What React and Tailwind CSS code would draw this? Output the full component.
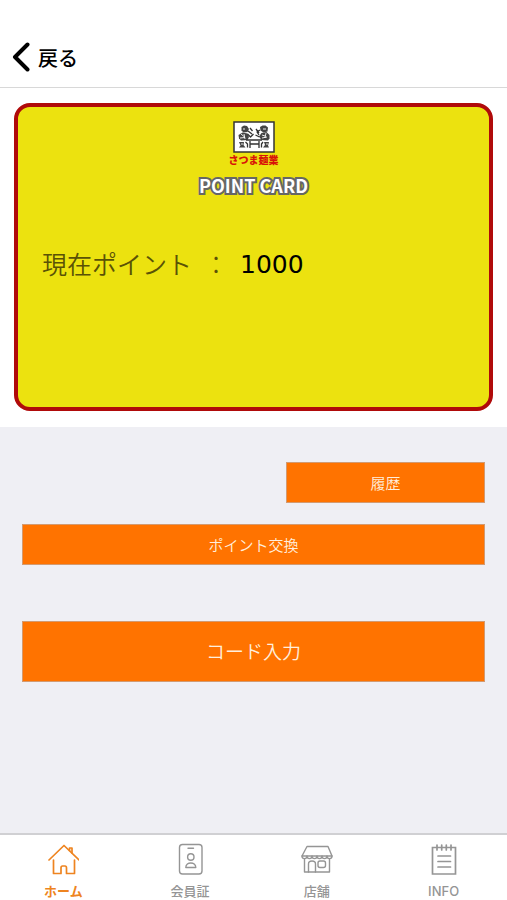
import React from "react";

const fontJp = "font-['Liberation_Sans','Noto_Sans_CJK_JP',sans-serif]";

function HomeIcon() {
  return (
    <svg width="32" height="32" viewBox="0 0 32 32" fill="none" stroke="currentColor" strokeWidth="1.7" strokeLinecap="round" strokeLinejoin="round" aria-hidden="true">
      <path d="M2 17 17 2.500 32 17" />
      <path d="M22.500 7.500V5h2.500v5" />
      <path d="M6.500 17V30.500H14V25q0-2 1.500-2h2.500q1.500 0 1.500 2V30.500H27.500V17" />
    </svg>
  );
}

function MemberIcon() {
  return (
    <svg width="32" height="32" viewBox="0 0 32 32" fill="none" stroke="currentColor" strokeWidth="1.4" strokeLinecap="round" strokeLinejoin="round" aria-hidden="true">
      <rect x="5.500" y="1.500" width="22.500" height="29.500" rx="3" />
      <path d="M14 5.300h5.500" />
      <circle cx="16.800" cy="14" r="3.200" />
      <path d="M11.800 24.500c0-6 10-6 10 0z" />
    </svg>
  );
}

function ShopIcon() {
  return (
    <svg width="32" height="32" viewBox="0 0 32 32" fill="none" stroke="currentColor" strokeWidth="1.4" strokeLinecap="round" strokeLinejoin="round" aria-hidden="true">
      <path d="M6 3.500h21L31 13H1z" />
      <path d="M1 13c0 3.500 5 3.500 5 0c0 3.500 5 3.500 5 0c0 3.500 5 3.500 5 0c0 3.500 5 3.500 5 0c0 3.500 5 3.500 5 0c0 3.500 5 3.500 5 0" />
      <path d="M3.500 16v13h25V16" />
      <path d="M7.500 29V21q0-3 3.500-3t3.500 3v8" />
      <rect x="17" y="18" width="7.500" height="6.500" rx="2" />
    </svg>
  );
}

function NoteIcon() {
  return (
    <svg width="32" height="32" viewBox="0 0 32 32" fill="none" stroke="currentColor" strokeWidth="1.700" strokeLinecap="round" aria-hidden="true">
      <path d="M4.500 4.500h23v26.500H4.500z" />
      <path d="M9 2v5M13.700 2v5M18.300 2v5M23 2v5" />
      <path d="M10 13h12.500M10 18.500h12.500M10 24h12.500" />
    </svg>
  );
}

function ShopMark() {
  return (
    <svg width="42" height="32" viewBox="0 0 42 32" fill="none" stroke="#333" aria-hidden="true">
      <rect x="1" y="1" width="40" height="30" fill="#fff" strokeWidth="1.500" />
      <g fill="#444" stroke="none">
        <path d="M8.500 6l2.500-1.500 3 .5 2 3-1.500 3-4 .5-2-2z" />
        <path d="M27 6l2.500-1.500h3l2.500 2-.5 4-4 1-3-2z" />
        <path d="M5.500 14l4-2.500 5 1 1.500 3.500-1.500 3-6.500.500-2-2z" />
        <path d="M36.500 14l-3-3-5 1-2.500 3.500 2.500 3.500 6.500.500 1.500-2z" />
        <path d="M6 21h5l-.5 3 2 2.500H6l1.500-2zM36 21h-5l1 3-2 2.500h6l-1-2z" />
      </g>
      <g strokeWidth="1.300" strokeLinejoin="round">
        <path d="M14.500 13l3 3 3-3M15 10l4 3M17 7l2.500 3" />
        <path d="M27 9l-3 2 2 3M23 8l3 4M22.500 14l4 2" />
        <path d="M13 19h16M17 20v7M26 20v7M17 23h9" />
        <path d="M12.500 21l2 2v3.500M30 21l-1.500 2v3.500" />
      </g>
      <g stroke="#fff" strokeWidth="0.900">
        <path d="M10 8h2M8 13l3 2.500M7 17l5-.5M11 13l1 5M30 8h3M29 14l3 1M29 17l5-1M33 12l-1 5M8 23h2M33 23h2" />
      </g>
    </svg>
  );
}

const tabs = [
  { label: "ホーム", Icon: HomeIcon, active: true },
  { label: "会員証", Icon: MemberIcon },
  { label: "店舗", Icon: ShopIcon },
  { label: "INFO", Icon: NoteIcon },
];

function ActionButton({ children, className }) {
  return (
    <button type="button" className={`flex items-center justify-center border border-[#d39a70] bg-[#ff7300] pt-1 font-[350] text-[#ffeedd] ${className}`}>
      {children}
    </button>
  );
}

export default function App() {
  return (
    <div className={`flex min-h-screen flex-col bg-[#efeff4] ${fontJp}`} lang="ja">
      <header className="flex h-22 items-end border-b border-[#d8d8d8] bg-white px-3 pb-3">
        <button type="button" className="flex items-center gap-2 text-xl text-black">
          <svg width="18" height="30" viewBox="0 0 18 30" fill="none" stroke="currentColor" strokeWidth="4" strokeLinecap="round" strokeLinejoin="round" aria-hidden="true">
            <path d="M15.500 2.500 3 15l12.500 12.500" />
          </svg>
          <span className="pt-1 leading-8 font-medium">戻る</span>
        </button>
      </header>

      <main className="flex-1">
        <section className="bg-white px-3.5 pt-[15px] pb-4">
          <div className="flex h-[308px] flex-col rounded-2xl border-4 border-[#b00a0a] bg-[#ece20f]">
            <div className="flex flex-col items-center pt-3.5">
              <ShopMark />
              <p className="text-[10px] leading-4 font-black text-[#d81408]">さつま麺業</p>
              <h1 className="font-['Noto_Sans_CJK_JP',sans-serif] text-lg leading-8 font-bold text-white [paint-order:stroke_fill] [-webkit-text-stroke:4px_#666]">
                POINT CARD
              </h1>
            </div>
            <p className="flex items-center pt-11 pl-6 text-[25px] leading-10 font-[350] text-[#5a5206]">
              <span>現在ポイント</span>
              <span className="w-12 text-center font-light">：</span>
              <span className="font-['DejaVu_Sans',sans-serif] font-normal text-black">1000</span>
            </p>
          </div>
        </section>

        <div className="flex flex-col px-[22px] pt-[35px]">
          <ActionButton className="h-[41px] w-[43%] self-end text-[15px]">履歴</ActionButton>
          <ActionButton className="mt-[21px] h-[41px] text-[15px]">ポイント交換</ActionButton>
          <ActionButton className="mt-14 h-[61px] text-[19px]">コード入力</ActionButton>
        </div>
      </main>

      <nav className="grid h-[67px] grid-cols-4 border-t-2 border-[#d0d0d3] bg-white">
        {tabs.map(({ label, Icon, active }) => (
          <a
            key={label}
            href="#"
            aria-current={active ? "page" : undefined}
            className={`flex flex-col items-center pt-2 font-['Inter','Noto_Sans_CJK_JP',sans-serif] text-[13px] ${active ? "font-bold text-[#ee8420]" : "font-medium text-[#959595]"}`}
          >
            <Icon />
            <span className="pt-1 leading-6">{label}</span>
          </a>
        ))}
      </nav>
    </div>
  );
}
